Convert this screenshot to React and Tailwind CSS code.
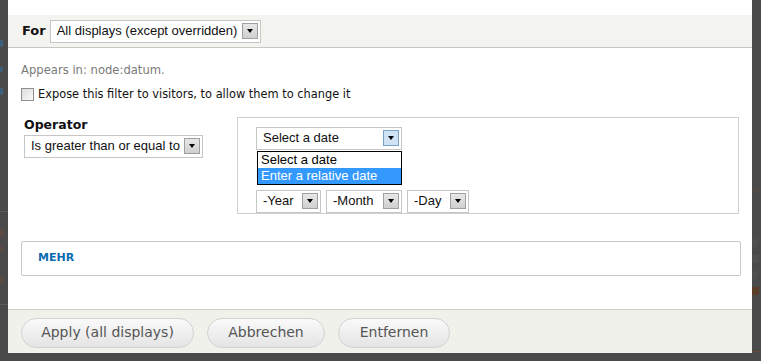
import React from "react";

const ui = { fontFamily: '"DejaVu Sans", Verdana, sans-serif' };
const sel = { fontFamily: '"Liberation Sans", Arial, sans-serif' };

function Arrow({ active }) {
  return (
    <div
      className={`w-[16px] h-[16px] border flex items-center justify-center ${
        active ? "border-[#7aa2c8] bg-[#cfe3f5]" : "border-[#a0a0a0] bg-gradient-to-b from-[#e8e8e8] to-[#cfcfcf]"
      }`}
    >
      <div className="w-0 h-0 border-l-[3px] border-r-[3px] border-t-[4px] border-l-transparent border-r-transparent border-t-black" />
    </div>
  );
}

function Select({ label, width, active }) {
  return (
    <div
      className="h-[23px] bg-white border border-[#c6c6c6] flex items-center justify-between pl-[6px] pr-[2px] text-[13px] text-[#111]"
      style={{ ...sel, width }}
    >
      <span className="whitespace-nowrap">{label}</span>
      <Arrow active={active} />
    </div>
  );
}

export default function App() {
  return (
    <div className="w-[761px] h-[361px] bg-[#4a4a4a] flex overflow-hidden" style={ui}>
      {/* overlay strip, bits of the page behind */}
      <div className="w-[8px] shrink-0 flex flex-col">
        <div className="mt-[40px] w-[3px] h-[7px] bg-[#3d5f7a]" />
        <div className="mt-[20px] w-[3px] h-[5px] bg-[#3d5f7a]" />
        <div className="mt-[16px] w-[3px] h-[7px] bg-[#3d5f7a]" />
        <div className="mt-[116px] w-[8px] h-px bg-[#5c5c5c]" />
        <div className="mt-[18px] w-[4px] h-[7px] bg-[#5a4a44]" />
        <div className="mt-[9px] w-[3px] h-[7px] bg-[#5a4a44]" />
        <div className="mt-[24px] w-[4px] h-[7px] bg-[#5a4a44]" />
        <div className="mt-[20px] w-[8px] h-px bg-[#5c5c5c]" />
      </div>

      <div className="w-[744px] h-[353px] bg-white flex flex-col shrink-0">
        <div className="h-[15px]" />
        <div className="h-[33px] bg-[#f3f3ef] border-b border-[#c6c6c2] flex items-center pl-[14px] gap-[4px]">
          <span className="text-[13px] font-bold text-[#111]">For</span>
          <Select label="All displays (except overridden)" width={211} />
        </div>

        <div className="pl-[13px] pr-[12px] flex flex-col">
          <div className="mt-[14px] text-[11.6px] text-[#7a7a7a]">Appears in: node:datum.</div>

          <div className="mt-[7px] flex items-center gap-[4px]">
            <div className="w-[13px] h-[13px] border border-[#8e8f8f] bg-gradient-to-br from-[#dcdcdc] to-[#fafafa]" />
            <span className="text-[11.4px] text-[#111]">Expose this filter to visitors, to allow them to change it</span>
          </div>

          <div className="mt-[13px] flex">
            <div className="w-[216px] pl-[3px] pt-[1px]">
              <div className="text-[12.5px] font-bold text-[#111] leading-[14px]">Operator</div>
              <div className="mt-[3px]">
                <Select label="Is greater than or equal to" width={179} />
              </div>
            </div>

            <div className="w-[502px] h-[97px] border border-[#cfcfcf] pl-[18px] pt-[9px]">
              <div className="relative">
                <Select label="Select a date" width={146} active />
                <div className="absolute left-[1px] top-[24px] w-[145px] border border-black bg-white text-[13px] z-10" style={sel}>
                  <div className="h-[16px] leading-[16px] pl-[3px] text-black">Select a date</div>
                  <div className="h-[16px] leading-[16px] pl-[3px] text-white bg-[#3399ff]">Enter a relative date</div>
                </div>
              </div>
              <div className="mt-[40px] flex gap-[5px]">
                <Select label="-Year" width={65} />
                <Select label="-Month" width={76} />
                <Select label="-Day" width={62} />
              </div>
            </div>
          </div>

          <div className="mt-[27px] w-[720px] h-[35px] border border-[#c8c8c8] rounded-[2px] flex items-center pl-[16px]">
            <span className="text-[11px] font-bold text-[#0a6bb0]">MEHR</span>
          </div>
        </div>

        <div className="mt-auto h-[44px] bg-[#f1f1eb] border-t border-[#cfcfcb] flex items-center pl-[13px] pt-[2px] gap-[13px]">
          <button className="w-[173px] h-[30px] rounded-full border border-[#d2d2d2] bg-gradient-to-b from-[#fafafa] to-[#e4e4e4] text-[14px] text-[#555]">
            Apply (all displays)
          </button>
          <button className="w-[118px] h-[30px] rounded-full border border-[#d2d2d2] bg-gradient-to-b from-[#fafafa] to-[#e4e4e4] text-[14px] text-[#555]">
            Abbrechen
          </button>
          <button className="w-[112px] h-[30px] rounded-full border border-[#d2d2d2] bg-gradient-to-b from-[#fafafa] to-[#e4e4e4] text-[14px] text-[#555]">
            Entfernen
          </button>
        </div>
      </div>

      <div className="w-[9px] shrink-0 flex flex-col">
        <div className="mt-[190px] w-[9px] h-px bg-[#5a4a44]" />
        <div className="mt-[48px] w-[6px] h-[8px] bg-[#4f4f4f]" />
        <div className="mt-[8px] w-[7px] h-[8px] bg-[#4f4f4f]" />
        <div className="mt-[8px] w-[6px] h-[8px] bg-[#4f4f4f]" />
        <div className="mt-[8px] w-[7px] h-[8px] bg-[#5a3e2a]" />
        <div className="mt-[56px] w-[9px] h-px bg-[#6a4a3a]" />
      </div>
    </div>
  );
}
